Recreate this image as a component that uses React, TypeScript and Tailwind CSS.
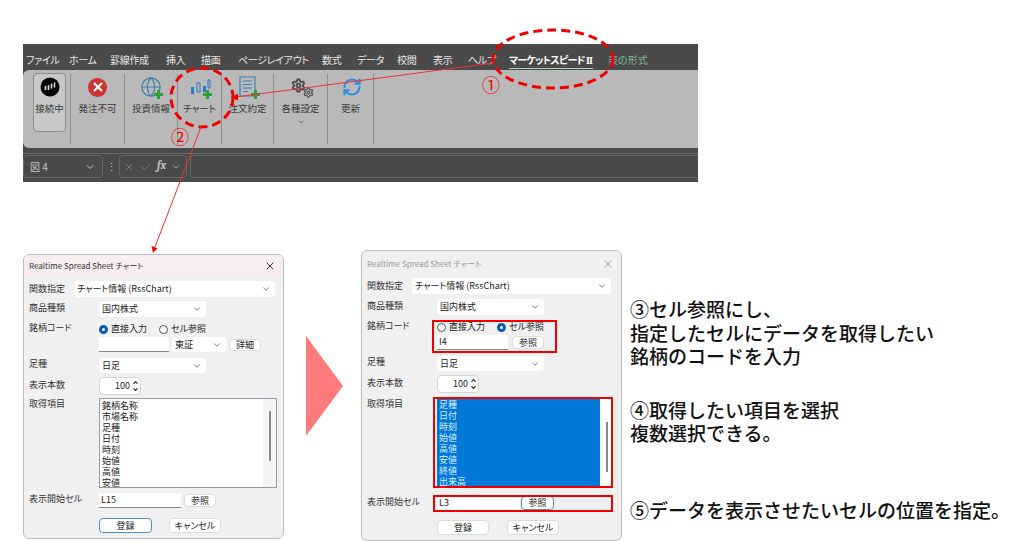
import { ChevronDown, ChevronUp, Globe, RefreshCw, Settings, X, Check } from 'lucide-react';
import type { ReactNode } from 'react';

const tabs = [
  { label: 'ファイル', width: 'w-[43px]' },
  { label: 'ホーム', width: 'w-[41px]' },
  { label: '罫線作成', width: 'w-[56px]' },
  { label: '挿入', width: 'w-[35px]' },
  { label: '描画', width: 'w-[37px]' },
  { label: 'ページレイアウト', width: 'w-[84px]' },
  { label: '数式', width: 'w-[35px]' },
  { label: 'データ', width: 'w-[40px]' },
  { label: '校閲', width: 'w-[36px]' },
  { label: '表示', width: 'w-[35px]' },
  { label: 'ヘルプ', width: 'w-[41px]' },
];

function Plus() {
  return (
    <svg className="absolute right-0 bottom-0" width="11" height="11" viewBox="0 0 11 11">
      <path d="M5.500 1v9M1 5.500h9" stroke="#2e9e3f" strokeWidth="3" />
    </svg>
  );
}

function RibbonItem({ width, label, icon, menu }: { width: string; label: string; icon: ReactNode; menu?: boolean }) {
  return (
    <div className={`${width} flex flex-col items-center border-r border-[#8f8f8f] h-[70px] mt-1`}>
      <div className="relative w-[26px] h-[26px] flex items-center justify-center">{icon}</div>
      <span className="text-[9.5px] leading-3 mt-[2px] text-[#3a3a3a] whitespace-nowrap">{label}</span>
      {menu && <ChevronDown size={8} className="mt-1 text-[#444]" />}
    </div>
  );
}

function Ribbon() {
  return (
    <div className="w-[675px] h-[138px] bg-[#4a4a4a] flex flex-col">
      <div className="h-[26px] flex items-center pt-[5px] pl-[3px] text-[10px] text-[#e6e6e6]">
        {tabs.map((t) => (
          <span key={t.label} className={`${t.width} shrink-0 whitespace-nowrap tracking-[-0.3px]`}>{t.label}</span>
        ))}
        <span className="w-[84px] shrink-0 border-b border-[#a5d6b5] font-bold text-white whitespace-nowrap leading-[14px] mt-[2px] tracking-[-0.8px]">
          マーケットスピード <span className="font-['Liberation_Serif',serif]">II</span>
        </span>
        <span className="ml-[15px] text-[#7fb59a] whitespace-nowrap">表の形式</span>
      </div>
      <div className="h-[78px] bg-[#b9b9b9] rounded-l-md flex pl-[10px] shrink-0">
        <div className="w-[33px] h-[59px] mt-[3px] rounded-sm border border-[#8c8c8c] bg-[#c8c8c8] flex flex-col items-center">
          <svg className="mt-[3px]" width="20" height="20" viewBox="0 0 20 20">
            <circle cx="10" cy="10" r="9.500" fill="#050505" />
            <path d="M5.500 9v4M8.500 8v5M11.500 6.500v5M14.500 5.500v5" stroke="#d8d8d8" strokeWidth="1.600" />
          </svg>
          <span className="text-[9.5px] leading-3 mt-[5px] text-[#3a3a3a] whitespace-nowrap">接続中</span>
        </div>
        <div className="w-[5px] h-[70px] mt-1 border-r border-[#8f8f8f]" />
        <RibbonItem
          width="w-[54px]"
          label="発注不可"
          icon={
            <div className="w-[19px] h-[19px] rounded-full bg-[#cc3333] flex items-center justify-center">
              <X size={14} strokeWidth={3.5} className="text-white" />
            </div>
          }
        />
        <RibbonItem
          width="w-[53px]"
          label="投資情報"
          icon={
            <>
              <Globe size={22} strokeWidth={1.3} className="text-[#3f7fa8]" />
              <Plus />
            </>
          }
        />
        <RibbonItem
          width="w-[44px]"
          label="チャート"
          icon={
            <>
              <svg width="24" height="24" viewBox="0 0 24 24">
                <path d="M3 12h3v7H3zM15 11h3v6h-3z" fill="#2b7cc4" />
                <path d="M9 8h3v9H9zM20 5h2v8h-2z" fill="none" stroke="#2b7cc4" strokeWidth="1" />
              </svg>
              <Plus />
            </>
          }
        />
        <RibbonItem
          width="w-[52px]"
          label="注文約定"
          icon={
            <>
              <svg width="24" height="24" viewBox="0 0 24 24" fill="none" stroke="#3f7fb8" strokeWidth="1.2">
                <path d="M4 2h15v19H4z" />
                <path d="M7 6h9M7 9.500h9M7 13h9M7 16.500h5" />
              </svg>
              <Plus />
            </>
          }
        />
        <RibbonItem
          width="w-[54px]"
          label="各種設定"
          menu
          icon={
            <>
              <Settings size={15} strokeWidth={3} className="absolute left-[3px] top-[4px] text-[#4a4a4a]" />
              <Settings size={11} strokeWidth={3} className="absolute right-0 bottom-[2px] text-[#5a5a5a]" />
            </>
          }
        />
        <RibbonItem width="w-[46px]" label="更新" icon={<RefreshCw size={20} strokeWidth={2.6} className="ml-[2px] text-[#2f8fe0]" />} />
      </div>
      <div className="h-[6px] shrink-0 border-b border-[#6a6a6a]" />
      <div className="flex items-start pt-[1px] text-[#c4c4c4]">
        <div className="w-[80px] h-[23px] rounded-sm border border-[#666] flex items-center justify-between px-[6px] text-[10px]">
          <span>図 4</span>
          <ChevronDown size={12} />
        </div>
        <span className="w-[16px] text-center text-[11px] leading-[22px]">⋮</span>
        <div className="w-[68px] h-[23px] rounded-sm border border-[#666] flex items-center gap-[5px] px-[3px]">
          <X size={12} className="text-[#777]" />
          <Check size={12} className="text-[#777]" />
          <span className="font-serif italic font-bold text-[11px]">fx</span>
          <ChevronDown size={10} />
        </div>
        <div className="ml-[3px] flex-1 h-[23px] rounded-l-sm border border-[#666] border-r-0" />
      </div>
    </div>
  );
}

function Label({ children }: { children: ReactNode }) {
  return <span className="w-[70px] mb-[3px] text-[9px] leading-3 text-[#333] whitespace-nowrap">{children}</span>;
}

function Select({ width, value }: { width: string; value: string }) {
  return (
    <div className={`${width} h-full bg-white rounded-sm flex items-center justify-between pl-[3px] pr-[4px] text-[9px] text-[#222] whitespace-nowrap`}>
      <span>{value}</span>
      <ChevronDown size={10} className="text-[#666]" />
    </div>
  );
}

function Btn({ width, children, focus }: { width: string; children: ReactNode; focus?: boolean }) {
  return (
    <div className={`${width} h-full bg-white rounded-sm border ${focus ? 'border-[#4f8fc0]' : 'border-[#dcdcdc]'} flex items-center justify-center text-[9px] text-[#222]`}>
      {children}
    </div>
  );
}

function Radio({ label, on }: { label: string; on?: boolean }) {
  return (
    <span className="flex items-center gap-[3px] text-[9px] text-[#222] whitespace-nowrap">
      <span className={`w-[9px] h-[9px] rounded-full bg-white ${on ? 'border-[3px] border-[#0a5bb5]' : 'border border-[#555]'}`} />
      {label}
    </span>
  );
}

function Spinner() {
  return (
    <div className="w-[42px] h-full bg-white border border-[#d4d4d4] rounded-sm flex items-center justify-end pr-[1px] text-[9px] text-[#222]">
      <span>100</span>
      <div className="ml-[2px] flex flex-col">
        <ChevronUp size={7} strokeWidth={4} />
        <ChevronDown size={7} strokeWidth={4} />
      </div>
    </div>
  );
}

function Dialog({ className, titleClass, titleHeight, children, title }: { className: string; titleClass: string; titleHeight: string; children: ReactNode; title: string }) {
  return (
    <div className={`w-[261px] ${className} shrink-0 bg-[#f0f0f0] border border-[#bdbdbd] rounded-md overflow-hidden flex flex-col`}>
      <div className={`${titleHeight} ${titleClass} flex items-center justify-between pl-[5px] pr-[7px] text-[8px] shrink-0`}>
        <span>{title}</span>
        <X size={12} />
      </div>
      <div className="relative flex-1 pl-[5px] flex flex-col">{children}</div>
    </div>
  );
}

function LeftDialog() {
  const items = ['銘柄名称', '市場名称', '足種', '日付', '時刻', '始値', '高値', '安値'];
  return (
    <Dialog className="h-[285px] mt-[4px]" titleClass="bg-[#f8eef0] text-[#333]" titleHeight="h-[22px]" title="Realtime Spread Sheet チャート">
      <div className="h-4 mt-1 flex items-center">
        <span className="w-[45px] text-[9px] text-[#333]">関数指定</span>
        <Select width="w-[201px]" value="チャート情報 (RssChart)" />
      </div>
      <div className="h-4 mt-1 flex items-center"><Label>商品種類</Label><Select width="w-[107px]" value="国内株式" /></div>
      <div className="h-[14px] mt-[5px] flex items-center"><Label>銘柄コード</Label><div className="flex gap-3"><Radio label="直接入力" on /><Radio label="セル参照" /></div></div>
      <div className="h-[15px] mt-[1px] pl-[70px] flex items-center gap-[3px]">
        <div className="w-[70px] h-full bg-white border-b border-[#888]" />
        <Select width="w-[54px]" value="東証" />
        <div className="h-[12px] flex"><Btn width="w-[32px]">詳細</Btn></div>
      </div>
      <div className="h-[15px] mt-[6px] flex items-center"><Label>足種</Label><Select width="w-[107px]" value="日足" /></div>
      <div className="h-[18px] mt-1 flex items-center"><Label>表示本数</Label><Spinner /></div>
      <div className="h-[90px] mt-[3px] flex items-start">
        <Label>取得項目</Label>
        <div className="w-[178px] h-full bg-white border border-[#9a9aa8] flex">
          <div className="flex-1 pl-[2px] text-[9px] leading-[11px] text-[#222] overflow-hidden pt-[1px]">
            {items.map((i) => <div key={i}>{i}</div>)}
          </div>
          <div className="w-[13px] bg-[#f4f4f4] flex justify-center pt-3"><div className="w-[2px] h-[50px] bg-[#8a8a8a]" /></div>
        </div>
      </div>
      <div className="h-[15px] mt-[5px] flex items-center">
        <Label>表示開始セル</Label>
        <div className="w-[82px] h-full bg-white border-b border-[#888] flex items-center pl-[2px] text-[9px] text-[#222]">L15</div>
        <div className="h-[13px] ml-[3px] flex"><Btn width="w-[32px]">参照</Btn></div>
      </div>
      <div className="h-[15px] mt-[10px] pl-[70px] flex gap-[17px]">
        <Btn width="w-[53px]" focus>登録</Btn>
        <Btn width="w-[52px]">キャンセル</Btn>
      </div>
    </Dialog>
  );
}

function RightDialog() {
  const items = ['足種', '日付', '時刻', '始値', '高値', '安値', '終値', '出来高'];
  return (
    <Dialog className="h-[291px]" titleClass="bg-[#f0f0f0] text-[#9a9a9a]" titleHeight="h-[25px]" title="Realtime Spread Sheet チャート">
      <div className="h-4 mt-[2px] flex items-center">
        <span className="w-[45px] text-[9px] text-[#333]">関数指定</span>
        <Select width="w-[199px]" value="チャート情報 (RssChart)" />
      </div>
      <div className="h-4 mt-[5px] flex items-center"><Label>商品種類</Label><Select width="w-[107px]" value="国内株式" /></div>
      <div className="h-[14px] mt-[5px] flex items-center"><Label>銘柄コード</Label><div className="flex gap-3"><Radio label="直接入力" /><Radio label="セル参照" on /></div></div>
      <div className="h-[15px] mt-[1px] pl-[70px] flex items-center gap-1">
        <div className="w-[71px] h-full bg-white border-b border-[#888] flex items-center pl-[2px] text-[9px] text-[#222]">I4</div>
        <div className="h-[13px] flex"><Btn width="w-[32px]">参照</Btn></div>
      </div>
      <div className="h-[15px] mt-[6px] flex items-center"><Label>足種</Label><Select width="w-[107px]" value="日足" /></div>
      <div className="h-[18px] mt-1 flex items-center"><Label>表示本数</Label><Spinner /></div>
      <div className="h-[88px] mt-[5px] flex items-start">
        <Label>取得項目</Label>
        <div className="w-[176px] h-full bg-white flex">
          <div className="w-[163px] h-full bg-[#0078d7] pl-[2px] text-[9px] leading-[11px] text-[#d8ecff] overflow-hidden pt-[1px]">
            {items.map((i) => <div key={i}>{i}</div>)}
          </div>
          <div className="flex-1 flex justify-center pt-6"><div className="w-[2px] h-[50px] bg-[#8a8a8a]" /></div>
        </div>
      </div>
      <div className="h-[14px] mt-[10px] flex items-center">
        <Label>表示開始セル</Label>
        <div className="w-[83px] h-full bg-white flex items-center pl-[2px] text-[9px] text-[#222]">L3</div>
        <div className="h-[14px] ml-[1px] flex"><Btn width="w-[33px]" focus>参照</Btn></div>
      </div>
      <div className="h-[15px] mt-[10px] pl-[70px] flex gap-[18px]">
        <Btn width="w-[52px]">登録</Btn>
        <Btn width="w-[52px]">キャンセル</Btn>
      </div>
      <div className="absolute left-[70px] top-[44px] w-[125px] h-[33px] border-2 border-[#f00000]" />
      <div className="absolute left-[71px] top-[121px] w-[180px] h-[91px] border-2 border-[#f00000]" />
      <div className="absolute left-[71px] top-[219px] w-[180px] h-[17px] border-2 border-[#f00000]" />
    </Dialog>
  );
}

export default function App() {
  return (
    <div className="relative w-[1024px] h-[541px] overflow-hidden bg-white pt-[44px] font-['Noto_Sans_CJK_JP','Noto_Sans',sans-serif]">
      <div className="ml-[23px] [font-feature-settings:'palt']"><Ribbon /></div>
      <div className="flex items-start mt-[68px] ml-[23px]">
        <div className="[font-feature-settings:'palt']"><LeftDialog /></div>
        <svg className="ml-[22px] mt-[86px] shrink-0" width="37" height="100" viewBox="0 0 37 100">
          <path d="M0 0L37 50L0 100Z" fill="#ff7b7b" />
        </svg>
        <div className="ml-[18px] [font-feature-settings:'palt']"><RightDialog /></div>
        <div className="ml-[8px] mt-[47px] text-[19px] leading-[23.5px] font-medium text-[#111] whitespace-nowrap">
          <p>③セル参照にし、</p>
          <p>指定したセルにデータを取得したい</p>
          <p>銘柄のコードを入力</p>
          <p className="mt-[30px]">④取得したい項目を選択</p>
          <p>複数選択できる。</p>
          <p className="mt-[53px]">⑤データを表示させたいセルの位置を指定。</p>
        </div>
      </div>
      <svg className="absolute inset-0 pointer-events-none" width="1024" height="541" viewBox="0 0 1024 541" fill="none">
        <ellipse cx="553" cy="59" rx="60" ry="29" stroke="#f00000" strokeWidth="3" strokeDasharray="9 5" />
        <ellipse cx="202" cy="97.5" rx="31" ry="29.5" stroke="#f00000" strokeWidth="3" strokeDasharray="9 5" />
        <path d="M493 63L236 97" stroke="#f03030" strokeWidth="1" />
        <path d="M231 97.5l7-4v7z" fill="#f00000" />
        <path d="M201 127L155 247" stroke="#f03030" strokeWidth="1" />
        <path d="M153 253l-1.500-7 6 2.300z" fill="#f00000" />
      </svg>
      <span className="absolute left-[482px] top-[72px] text-[18px] leading-6 text-[#f00000]">①</span>
      <span className="absolute left-[171px] top-[124px] text-[18px] leading-6 text-[#f00000]">②</span>
    </div>
  );
}
